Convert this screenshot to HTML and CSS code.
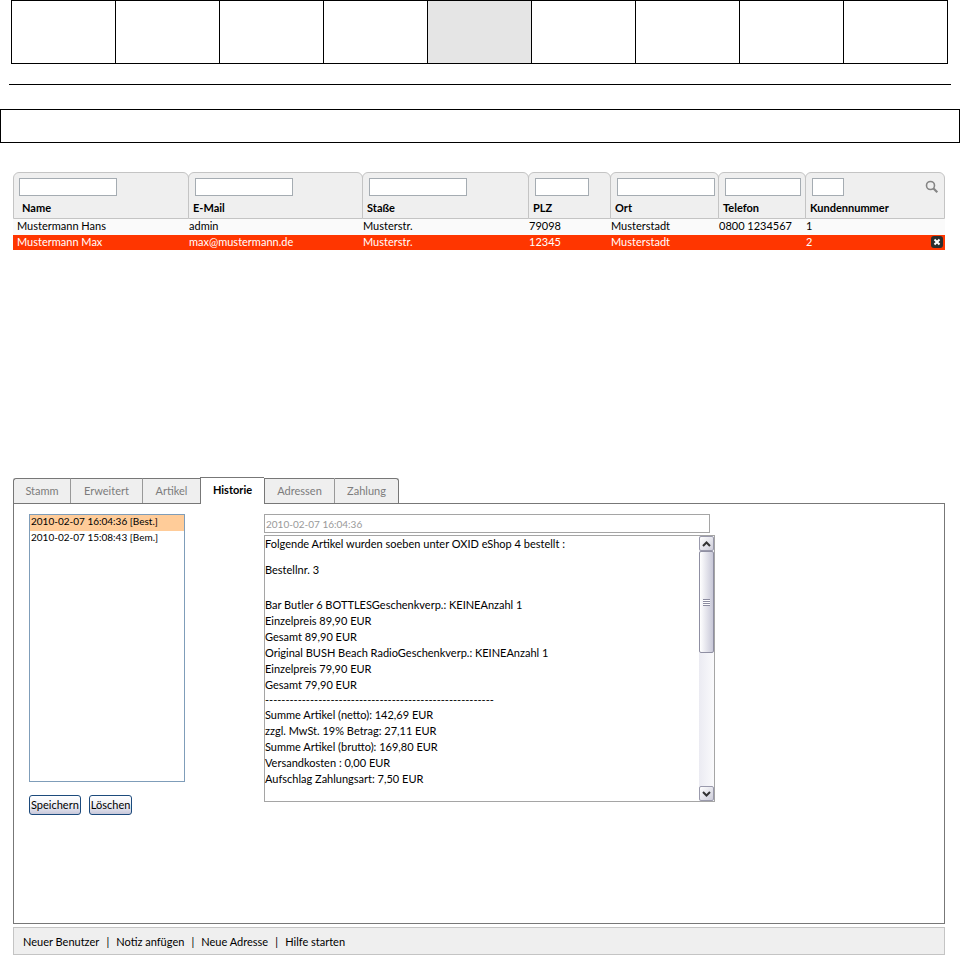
FILE: index.html
```html
<!DOCTYPE html>
<html lang="de">
<head>
<meta charset="utf-8">
<title>Benutzer – Historie</title>
<link rel="stylesheet" href="styles.css">
</head>
<body>
<div class="boxes">
  <div class="box"></div><div class="box"></div><div class="box"></div>
  <div class="box"></div><div class="box box-active"></div><div class="box"></div>
  <div class="box"></div><div class="box"></div><div class="box"></div>
</div>
<hr class="rule">
<div class="band"></div>

<main class="admin">
  <section class="list">
    <table class="users">
      <colgroup>
        <col class="c-name"><col class="c-mail"><col class="c-street"><col class="c-zip">
        <col class="c-city"><col class="c-phone"><col class="c-number">
      </colgroup>
      <thead>
        <tr>
          <th scope="col"><div class="head head-first"><input id="f1" class="filter" type="text"><label for="f1">Name</label></div></th>
          <th scope="col"><div class="head"><input id="f2" class="filter" type="text"><label for="f2">E-Mail</label></div></th>
          <th scope="col"><div class="head"><input id="f3" class="filter" type="text"><label for="f3">Staße</label></div></th>
          <th scope="col"><div class="head"><input id="f4" class="filter filter-zip" type="text"><label for="f4">PLZ</label></div></th>
          <th scope="col"><div class="head"><input id="f5" class="filter" type="text"><label for="f5">Ort</label></div></th>
          <th scope="col"><div class="head"><input id="f6" class="filter filter-phone" type="text"><label for="f6">Telefon</label></div></th>
          <th scope="col"><div class="head"><span class="filter-row"><input id="f7" class="filter filter-number" type="text"><button class="icon-button" type="button" aria-label="Suchen"><svg width="14" height="14" viewBox="0 0 14 14"><circle cx="5.5" cy="5.5" r="4" fill="none" stroke="#858585" stroke-width="1.6"/><path d="M8.5 8.5L12.3 12.3" stroke="#858585" stroke-width="2.2"/></svg></button></span><label for="f7">Kundennummer</label></div></th>
        </tr>
      </thead>
      <tbody>
        <tr>
          <td>Mustermann Hans</td><td>admin</td><td>Musterstr.</td><td>79098</td><td>Musterstadt</td><td>0800 1234567</td><td>1</td>
        </tr>
        <tr class="selected">
          <td>Mustermann Max</td><td>max@mustermann.de</td><td>Musterstr.</td><td>12345</td><td>Musterstadt</td><td></td>
          <td><div class="last-cell">2<button class="icon-button" type="button" aria-label="Entfernen"><svg width="12" height="12" viewBox="0 0 12 12"><rect width="12" height="12" rx="3" fill="#2b2f2f"/><path d="M3.5 3.5L8.5 8.5M8.5 3.5L3.5 8.5" stroke="#fff" stroke-width="2"/></svg></button></div></td>
        </tr>
      </tbody>
    </table>
  </section>

  <nav class="tabs">
    <a class="tab tab-first" href="#stamm">Stamm</a>
    <a class="tab" href="#erweitert">Erweitert</a>
    <a class="tab" href="#artikel">Artikel</a>
    <a class="tab tab-current" href="#historie">Historie</a>
    <a class="tab" href="#adressen">Adressen</a>
    <a class="tab tab-last" href="#zahlung">Zahlung</a>
  </nav>

  <section class="panel">
    <div class="left">
      <select class="entries" size="16" aria-label="Historie">
        <option selected>2010-02-07 16:04:36 [Best.]</option>
        <option>2010-02-07 15:08:43 [Bem.]</option>
      </select>
      <div class="actions">
        <button class="button" type="button">Speichern</button>
        <button class="button" type="button">Löschen</button>
      </div>
    </div>
    <div class="right">
      <input class="stamp" type="text" value="2010-02-07 16:04:36" aria-label="Datum" readonly>
      <div class="message">
        <div class="text">
          <p>Folgende Artikel wurden soeben unter OXID eShop 4 bestellt :</p>
          <p class="order">Bestellnr. 3</p>
          <p>Bar Butler 6 BOTTLESGeschenkverp.: KEINEAnzahl 1<br>Einzelpreis 89,90 EUR<br>Gesamt 89,90 EUR<br>Original BUSH Beach RadioGeschenkverp.: KEINEAnzahl 1<br>Einzelpreis 79,90 EUR<br>Gesamt 79,90 EUR</p>
          <p class="dashes">--------------------------------------------------------</p>
          <p>Summe Artikel (netto): 142,69 EUR<br>zzgl. MwSt. 19% Betrag: 27,11 EUR<br>Summe Artikel (brutto): 169,80 EUR<br>Versandkosten : 0,00 EUR<br>Aufschlag Zahlungsart: 7,50 EUR</p>
        </div>
        <div class="scrollbar">
          <button class="arrow" type="button" aria-label="Nach oben"><svg width="9" height="6" viewBox="0 0 9 6"><path d="M1 5L4.500 1.500L8 5" fill="none" stroke="#333" stroke-width="2"/></svg></button>
          <div class="thumb"><span class="grip"></span></div>
          <button class="arrow arrow-down" type="button" aria-label="Nach unten"><svg width="9" height="6" viewBox="0 0 9 6"><path d="M1 1L4.500 4.500L8 1" fill="none" stroke="#333" stroke-width="2"/></svg></button>
        </div>
      </div>
    </div>
  </section>

  <footer class="footer">
    <a href="#neu">Neuer Benutzer</a><span class="bar">|</span><a href="#notiz">Notiz anfügen</a><span class="bar">|</span><a href="#adresse">Neue Adresse</a><span class="bar">|</span><a href="#hilfe">Hilfe starten</a>
  </footer>
</main>
</body>
</html>
```
FILE: styles.css
```css
* { box-sizing: border-box; }
body { margin: 0; background: #fff; color: #000; font: 11px/16px "Trebuchet MS", Lato, sans-serif; }
input, select, button { font: inherit; color: inherit; margin: 0; }
a { color: inherit; text-decoration: none; }
p { margin: 0; }

.boxes { display: flex; height: 64px; margin: 0 12px 0 11px; border: 1px solid #000; }
.box { flex: 1; }
.box + .box { border-left: 1px solid #000; }
.box-active { background: #e5e5e5; }
.rule { height: 1px; margin: 20px 9px 24px; border: 0; background: #000; }
.band { height: 34px; border: 1px solid #000; }

.admin { margin: 29px 15px 4px 13px; }
.list { min-height: 305px; }
.users { width: 100%; table-layout: fixed; border-collapse: separate; border-spacing: 0; }
.c-name { width: 176px; }
.c-mail { width: 174px; }
.c-street { width: 166px; }
.c-zip { width: 82px; }
.c-city { width: 108px; }
.c-phone { width: 87px; }
.c-number { width: 139px; }
.users th { padding: 0; text-align: left; font-weight: 700; }
.head { height: 47px; margin-left: -1px; padding: 5px 2px 0 4px; background: #efefef; border: 1px solid #c4c4c4; border-radius: 6px 6px 0 0; }
.head label { display: block; margin-top: 4px; }
.head-first { margin-left: 0; padding-left: 3px; }
.head-first label { padding-left: 5px; }
.filter { display: block; width: 98px; height: 18px; margin-left: 2px; padding: 0 2px; border: 1px solid #a5acb2; background: #fff; }
.filter-zip { width: 54px; }
.filter-phone { width: 76px; }
.filter-number { width: 32px; }
.filter-row { display: flex; justify-content: space-between; align-items: center; padding-right: 3px; }
.icon-button { display: block; padding: 0; border: 0; background: none; }
.icon-button svg { display: block; }
.users td { height: 16px; padding: 0; line-height: 14px; vertical-align: top; background: #fafafa; white-space: nowrap; }
.users td:first-child { padding-left: 4px; }
.users .selected td { height: 15px; background: #ff3600; color: #fff; }
.last-cell { display: flex; justify-content: space-between; align-items: center; padding-right: 2px; }

.tabs { display: grid; grid-template-columns: 57px 72px 58px 64px 70px 65px; align-items: end; height: 26px; }
.tab { height: 25px; line-height: 24px; text-align: center; color: #7c7c7c; background: #efefef; border-top: 1px solid #777; border-left: 1px solid #999; }
.tab-first { border-left-color: #777; border-top-left-radius: 3px; }
.tab-current { height: 27px; margin-bottom: -1px; color: #000; font-weight: 700; background: #fff; border-color: #777; }
.tab-current + .tab { border-left-color: #777; }
.tab-last { border-right: 1px solid #777; border-top-right-radius: 3px; }

.panel { display: flex; gap: 79px; min-height: 421px; padding: 10px 15px; border: 1px solid #777; }
.left { width: 156px; }
.entries { display: block; width: 100%; height: 268px; padding: 0; font-size: 10px; border: 1px solid #7f9db9; border-radius: 0; background: #fff; overflow: hidden; outline: 0; }
.entries option { height: 16px; min-height: 16px; padding: 0 1px; line-height: 16px; color: #000; }
.entries option:checked { background: #ffcc99 linear-gradient(#ffcc99, #ffcc99); }
.actions { display: flex; gap: 8px; margin-top: 13px; }
.button { height: 20px; padding: 0 1px; line-height: 16px; border: 1px solid #1c4a7c; border-radius: 3px; background: linear-gradient(#fff, #f0f0f6 50%, #c8c8da); }
.right { width: 451px; }
.stamp { display: block; width: 446px; height: 19px; margin-bottom: 2px; padding: 0 1px; font-size: 10px; border: 1px solid #a5a5a5; color: #999; background: #fff; outline: 0; }
.message { display: flex; height: 267px; border: 1px solid #a5a5a5; }
.text { flex: 1; }
.order { margin: 10px 0 19px; }
.dashes { line-height: 14px; }
.scrollbar { display: flex; flex-direction: column; width: 15px; background: linear-gradient(90deg, #ebebf2, #fafafc); }
.arrow { display: flex; align-items: center; justify-content: center; height: 15px; padding: 0; border: 1px solid #9a9aac; border-radius: 2px; background: linear-gradient(135deg, #fff, #cdcdda); }
.arrow-down { margin-top: auto; }
.thumb { display: flex; align-items: center; justify-content: center; height: 102px; border: 1px solid #8f8fa2; border-radius: 2px; background: linear-gradient(90deg, #fff, #c8c8d8); }
.grip { width: 7px; height: 7px; background: repeating-linear-gradient(#8c8ca0 0 1px, #fff 1px 2px); }

.footer { display: flex; align-items: center; height: 28px; margin-top: 3px; padding: 2px 9px 0; background: #efefef; border: 1px solid #c4c4c4; }
.bar { width: 17px; text-align: center; }
```
